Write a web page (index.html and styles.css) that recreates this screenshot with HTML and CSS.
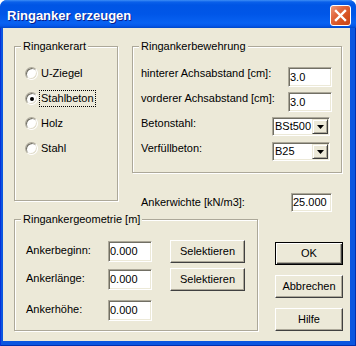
FILE: index.html
```html
<!DOCTYPE html>
<html lang="de">
<head>
    <meta charset="UTF-8">
    <meta name="viewport" content="width=device-width, initial-scale=1.0">
    <title>Ringanker erzeugen</title>
    <link rel="stylesheet" href="styles.css">
</head>
<body>
    <div class="window">
        <div class="titlebar">
            <span class="title">Ringanker erzeugen</span>
            <span class="close">
                <svg width="19" height="19" viewBox="0 0 19 19"><path d="M5 5 L14 14 M14 5 L5 14" stroke="#fff" stroke-width="2.4" stroke-linecap="square"/></svg>
            </span>
        </div>
        <div class="frame">
            <div class="client">
                <div class="top">
                    <div class="group art">
                        <span class="caption">Ringankerart</span>
                        <div class="radio"><span class="dot"></span>U-Ziegel</div>
                        <div class="radio checked"><span class="dot"></span><span class="focus">Stahlbeton</span></div>
                        <div class="radio"><span class="dot"></span>Holz</div>
                        <div class="radio"><span class="dot"></span>Stahl</div>
                    </div>
                    <div class="side">
                        <div class="group bew">
                            <span class="caption">Ringankerbewehrung</span>
                            <div class="row"><span class="lbl">hinterer Achsabstand [cm]:</span><span class="edit">3.0</span></div>
                            <div class="row"><span class="lbl">vorderer Achsabstand [cm]:</span><span class="edit">3.0</span></div>
                            <div class="row"><span class="lbl">Betonstahl:</span><span class="combo"><span class="val">BSt500</span><span class="drop"><svg width="7" height="4" viewBox="0 0 7 4"><path d="M0 0 H7 L3.5 4 Z" fill="#000"/></svg></span></span></div>
                            <div class="row"><span class="lbl">Verfüllbeton:</span><span class="combo"><span class="val">B25</span><span class="drop"><svg width="7" height="4" viewBox="0 0 7 4"><path d="M0 0 H7 L3.5 4 Z" fill="#000"/></svg></span></span></div>
                        </div>
                        <div class="wichte"><span class="lbl">Ankerwichte [kN/m3]:</span><span class="edit">25.000</span></div>
                    </div>
                </div>
                <div class="bottom">
                    <div class="group geo">
                        <span class="caption">Ringankergeometrie [m]</span>
                        <div class="row"><span class="lbl">Ankerbeginn:</span><span class="edit">0.000</span><span class="btn sel">Selektieren</span></div>
                        <div class="row"><span class="lbl">Ankerlänge:</span><span class="edit">0.000</span><span class="btn sel">Selektieren</span></div>
                        <div class="row last"><span class="lbl">Ankerhöhe:</span><span class="edit">0.000</span></div>
                    </div>
                    <div class="buttons">
                        <span class="btn default">OK</span>
                        <span class="btn">Abbrechen</span>
                        <span class="btn">Hilfe</span>
                    </div>
                </div>
            </div>
        </div>
    </div>
</body>
</html>
```
FILE: styles.css
```css
* { box-sizing: border-box; }
body { margin: 0; background: #fff; font-family: "Liberation Sans", Arial, sans-serif; font-size: 11px; line-height: 13px; color: #000; }
.window { width: 356px; height: 346px; display: flex; flex-direction: column; background: #0b56e0; border-radius: 7px 7px 0 0; overflow: hidden; }
.titlebar { height: 28px; flex: none; display: flex; align-items: flex-start; padding: 0 5px 0 7px; background: linear-gradient(#3d8ef5 0, #0a60ea 2px, #0055e5 5px, #0056e8 50%, #0862f2 82%, #0558ea 92%, #0047c8 100%); }
.title { margin-top: 8px; font-size: 13px; line-height: 15px; font-weight: bold; color: #fff; text-shadow: 1px 1px #0a1f8c; }
.close { margin-left: auto; margin-top: 5px; width: 21px; height: 21px; display: flex; align-items: center; justify-content: center; border: 1px solid #fff; border-radius: 3px; background: linear-gradient(135deg, #ee9a7c 0%, #e2683f 35%, #d4501f 70%, #c8451a 100%); }
.frame { flex: 1; padding: 0 6px 5px 3px; box-shadow: inset 1px 0 #0831d9, inset -1px -1px #0030b0; }
.client { height: 100%; background: #ece9d8; padding: 18px 0 0 11px; display: flex; flex-direction: column; gap: 7px; }
.top { display: flex; gap: 14px; align-items: flex-start; }
.bottom { display: flex; align-items: flex-start; }
.group { position: relative; border: 1px solid #aca899; box-shadow: inset 1px 1px #fff, 1px 1px #fff; }
.caption { position: absolute; top: -7px; left: 6px; padding: 0 2px; background: #ece9d8; white-space: nowrap; }
.art { width: 104px; height: 155px; padding: 14px 0 0 10px; }
.radio { height: 25px; display: flex; align-items: center; gap: 3px; }
.dot { width: 13px; height: 13px; border-radius: 50%; background: #fff; border: 1px solid; border-color: #aca899 #fff #fff #aca899; box-shadow: inset 1px 1px #716f64, inset -1px -1px #e2decd; display: flex; align-items: center; justify-content: center; }
.checked .dot::after { content: ""; width: 4px; height: 4px; border-radius: 50%; background: #000; }
.focus { outline: 1px dotted #000; outline-offset: 1px; }
.side { width: 210px; display: flex; flex-direction: column; }
.bew { height: 127px; padding: 20px 9px 0 8px; display: flex; flex-direction: column; gap: 5px; }
.row { height: 20px; display: flex; align-items: flex-start; justify-content: space-between; }
.edit { width: 44px; height: 20px; display: flex; align-items: center; padding-left: 1px; background: #fff; border: 1px solid; border-color: #aca899 #fff #fff #aca899; box-shadow: inset 1px 1px #716f64, inset -1px -1px #ece9d8; }
.combo { width: 58px; height: 19px; margin-right: 2px; display: flex; align-items: center; padding: 1px 1px 1px 1px; background: #fff; border: 1px solid; border-color: #aca899 #fff #fff #aca899; box-shadow: inset 1px 1px #716f64, inset -1px -1px #ece9d8; }
.val { flex: 1; padding-left: 1px; }
.drop { width: 16px; height: 15px; display: flex; align-items: center; justify-content: center; background: #ece9d8; border: 1px solid; border-color: #ece9d8 #404040 #404040 #ece9d8; box-shadow: inset 1px 1px #fff, inset -1px -1px #aca899; }
.wichte { margin-top: 20px; display: flex; align-items: center; justify-content: space-between; padding: 0 10px 0 9px; }
.wichte .edit { width: 41px; height: 19px; }
.geo { width: 244px; height: 112px; padding: 20px 0 0 11px; display: flex; flex-direction: column; gap: 5px; }
.geo .row { height: 23px; align-items: center; justify-content: flex-start; }
.geo .row.last { margin-top: 3px; }
.geo .lbl { width: 82px; margin-bottom: 3px; }
.geo .edit { height: 21px; }
.btn { height: 23px; display: flex; align-items: center; justify-content: center; background: #ece9d8; border: 1px solid; border-color: #fff #404040 #404040 #fff; box-shadow: inset -1px -1px #aca899; }
.sel { width: 75px; margin-left: 18px; }
.buttons { width: 68px; margin-left: 17px; padding-top: 23px; display: flex; flex-direction: column; gap: 10px; }
.default { border-color: #000; box-shadow: inset 1px 1px #fff, inset -1px -1px #404040, inset -2px -2px #aca899; }
```
